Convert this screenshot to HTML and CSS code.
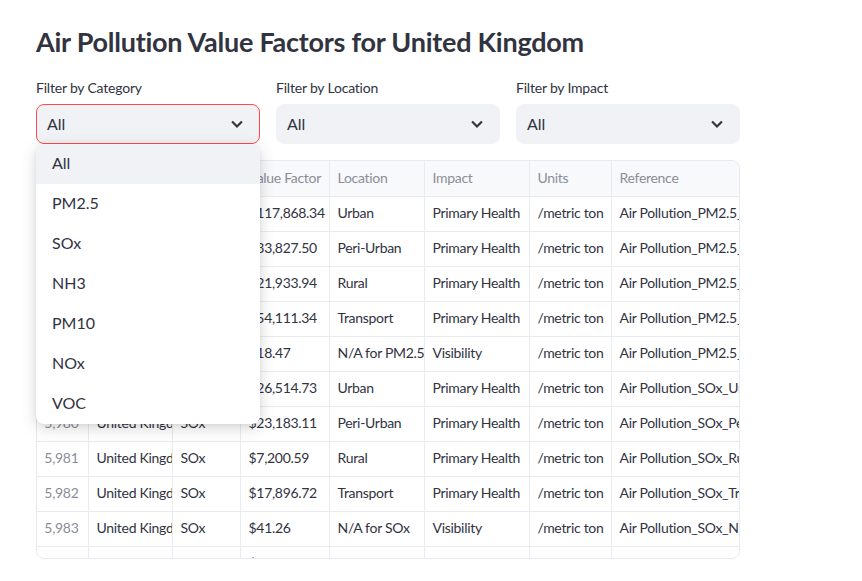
FILE: index.html
```html
<!DOCTYPE html>
<html lang="en">
<head>
<meta charset="utf-8">
<title>Air Pollution Value Factors</title>
<link rel="stylesheet" href="styles.css">
</head>
<body>
<main class="main">
  <h1 class="title">Air Pollution Value Factors for United Kingdom</h1>

  <div class="filters">
    <div class="filter">
      <label class="filter-label">Filter by Category</label>
      <div class="select-wrap">
        <div class="select select-open">
          <span class="select-value">All</span>
          <svg class="chevron" viewBox="0 0 24 24" width="20" height="20"><path d="M7 10l5 5 5-5" fill="none" stroke="#31333f" stroke-width="2.6" stroke-linecap="square" stroke-linejoin="miter"/></svg>
        </div>
        <ul class="menu">
          <li class="menu-item menu-item-active">All</li>
          <li class="menu-item">PM2.5</li>
          <li class="menu-item">SOx</li>
          <li class="menu-item">NH3</li>
          <li class="menu-item">PM10</li>
          <li class="menu-item">NOx</li>
          <li class="menu-item">VOC</li>
        </ul>
      </div>
    </div>
    <div class="filter">
      <label class="filter-label">Filter by Location</label>
      <div class="select">
        <span class="select-value">All</span>
        <svg class="chevron" viewBox="0 0 24 24" width="20" height="20"><path d="M7 10l5 5 5-5" fill="none" stroke="#31333f" stroke-width="2.6" stroke-linecap="square" stroke-linejoin="miter"/></svg>
      </div>
    </div>
    <div class="filter">
      <label class="filter-label">Filter by Impact</label>
      <div class="select">
        <span class="select-value">All</span>
        <svg class="chevron" viewBox="0 0 24 24" width="20" height="20"><path d="M7 10l5 5 5-5" fill="none" stroke="#31333f" stroke-width="2.6" stroke-linecap="square" stroke-linejoin="miter"/></svg>
      </div>
    </div>
  </div>

  <div class="grid">
    <table class="table">
      <colgroup>
        <col class="c-idx"><col class="c-country"><col class="c-cat"><col class="c-val"><col class="c-loc"><col class="c-imp"><col class="c-units"><col class="c-ref">
      </colgroup>
      <thead>
        <tr><th></th><th>Country</th><th>Category</th><th>Value Factor</th><th>Location</th><th>Impact</th><th>Units</th><th>Reference</th></tr>
      </thead>
      <tbody>
        <tr><td class="idx">5,974</td><td>United Kingdom</td><td>PM2.5</td><td>$117,868.34</td><td>Urban</td><td>Primary Health</td><td>/metric ton</td><td>Air Pollution_PM2.5_Urban_Primary Health</td></tr>
        <tr><td class="idx">5,975</td><td>United Kingdom</td><td>PM2.5</td><td>$33,827.50</td><td>Peri-Urban</td><td>Primary Health</td><td>/metric ton</td><td>Air Pollution_PM2.5_Peri-Urban_Primary Health</td></tr>
        <tr><td class="idx">5,976</td><td>United Kingdom</td><td>PM2.5</td><td>$21,933.94</td><td>Rural</td><td>Primary Health</td><td>/metric ton</td><td>Air Pollution_PM2.5_Rural_Primary Health</td></tr>
        <tr><td class="idx">5,977</td><td>United Kingdom</td><td>PM2.5</td><td>$54,111.34</td><td>Transport</td><td>Primary Health</td><td>/metric ton</td><td>Air Pollution_PM2.5_Transport_Primary Health</td></tr>
        <tr><td class="idx">5,978</td><td>United Kingdom</td><td>PM2.5</td><td>$18.47</td><td>N/A for PM2.5</td><td>Visibility</td><td>/metric ton</td><td>Air Pollution_PM2.5_N/A for PM2.5_Visibility</td></tr>
        <tr><td class="idx">5,979</td><td>United Kingdom</td><td>SOx</td><td>$26,514.73</td><td>Urban</td><td>Primary Health</td><td>/metric ton</td><td>Air Pollution_SOx_Urban_Primary Health</td></tr>
        <tr><td class="idx">5,980</td><td>United Kingdom</td><td>SOx</td><td>$23,183.11</td><td>Peri-Urban</td><td>Primary Health</td><td>/metric ton</td><td>Air Pollution_SOx_Peri-Urban_Primary Health</td></tr>
        <tr><td class="idx">5,981</td><td>United Kingdom</td><td>SOx</td><td>$7,200.59</td><td>Rural</td><td>Primary Health</td><td>/metric ton</td><td>Air Pollution_SOx_Rural_Primary Health</td></tr>
        <tr><td class="idx">5,982</td><td>United Kingdom</td><td>SOx</td><td>$17,896.72</td><td>Transport</td><td>Primary Health</td><td>/metric ton</td><td>Air Pollution_SOx_Transport_Primary Health</td></tr>
        <tr><td class="idx">5,983</td><td>United Kingdom</td><td>SOx</td><td>$41.26</td><td>N/A for SOx</td><td>Visibility</td><td>/metric ton</td><td>Air Pollution_SOx_N/A for SOx_Visibility</td></tr>
        <tr class="row-partial"><td class="idx">5,984</td><td>United Kingdom</td><td>NH3</td><td>$15,272.10</td><td>Urban</td><td>Primary Health</td><td>/metric ton</td><td>Air Pollution_NH3_Urban_Primary Health</td></tr>
      </tbody>
    </table>
  </div>
</main>
</body>
</html>
```

FILE: styles.css
```css
* { box-sizing: border-box; }

body {
  margin: 0;
  background: #ffffff;
  color: #31333f;
  font-family: "Lato", "Noto Sans", sans-serif;
}

.main {
  padding: 22px 0 0 36px;
  width: 740px;
}

.title {
  margin: 0;
  font-size: 27px;
  letter-spacing: -0.25px;
  line-height: 40px;
  font-weight: 700;
  color: #31333f;
}

.filters {
  display: flex;
  gap: 16px;
  margin-top: 14px;
}

.filter {
  width: 224px;
  flex: 0 0 224px;
  display: flex;
  flex-direction: column;
}

.filter-label {
  font-size: 14px;
  letter-spacing: -0.2px;
  line-height: 24px;
  margin-bottom: 4px;
  color: #31333f;
}

.select-wrap {
  position: relative;
}

.select {
  height: 40px;
  background: #f0f2f6;
  border: 1px solid #f0f2f6;
  border-radius: 8px;
  display: flex;
  align-items: center;
  justify-content: space-between;
  padding: 0 12px 2px 10px;
  font-size: 16px;
}

.select-open {
  border-color: #ff4b4b;
}

.chevron {
  display: block;
  margin-top: 2px;
}

.menu {
  position: absolute;
  top: 40px;
  left: 0;
  width: 224px;
  margin: 0;
  padding: 0;
  list-style: none;
  background: #ffffff;
  border-radius: 8px;
  overflow: hidden;
  box-shadow: 0 4px 16px rgba(0, 0, 0, 0.16), 0 1px 4px rgba(0, 0, 0, 0.06);
  z-index: 10;
}

.menu-item {
  height: 40px;
  display: flex;
  align-items: center;
  padding: 0 0 3px 16px;
  font-size: 16px;
  color: #31333f;
}

.menu-item-active {
  background: #f0f2f6;
}

.grid {
  margin-top: 16px;
  width: 704px;
  height: 399px;
  border: 1px solid #e6e9ef;
  border-radius: 8px;
  overflow: hidden;
}

.table {
  border-collapse: collapse;
  table-layout: fixed;
  width: 922px;
  font-size: 14px;
  letter-spacing: -0.3px;
}

.c-idx { width: 51px; }
.c-country { width: 84px; }
.c-cat { width: 68px; }
.c-val { width: 89px; }
.c-loc { width: 95px; }
.c-imp { width: 105px; }
.c-units { width: 82px; }
.c-ref { width: 348px; }

.table th,
.table td {
  border-right: 1px solid #e9ebef;
  border-bottom: 1px solid #e9ebef;
  padding: 0 0 2px 8px;
  white-space: nowrap;
  overflow: hidden;
  text-overflow: clip;
  text-align: left;
}

.table th {
  height: 35px;
  background: #f8f9fb;
  color: #8b8d98;
  font-weight: 400;
}

.table td {
  height: 35px;
  color: #31333f;
}

.table td.idx {
  color: #8b8d98;
  text-align: right;
  padding: 0 9px 2px 0;
}

.row-partial td {
  vertical-align: top;
  padding-top: 7px;
}

.row-partial td.idx {
  padding-top: 7px;
}
```
